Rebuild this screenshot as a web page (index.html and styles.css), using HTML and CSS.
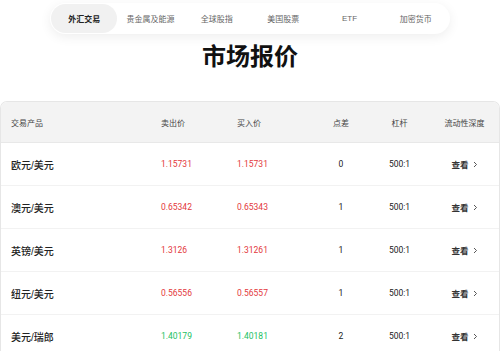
FILE: index.html
```html
<!DOCTYPE html>
<html lang="zh-CN">
<head>
  <meta charset="UTF-8">
  <meta name="viewport" content="width=device-width, initial-scale=1.0">
  <title>市场报价</title>
  <link rel="stylesheet" href="styles.css">
</head>
<body>
  <nav class="tabs">
    <button class="tab active">外汇交易</button>
    <button class="tab">贵金属及能源</button>
    <button class="tab">全球股指</button>
    <button class="tab">美国股票</button>
    <button class="tab">ETF</button>
    <button class="tab">加密货币</button>
  </nav>

  <h1 class="title">市场报价</h1>

  <div class="quotes">
    <div class="row head">
      <span class="cell">交易产品</span>
      <span class="cell">卖出价</span>
      <span class="cell">买入价</span>
      <span class="cell mid">点差</span>
      <span class="cell mid">杠杆</span>
      <span class="cell mid">流动性深度</span>
    </div>
    <div class="row">
      <span class="cell name">欧元/美元</span>
      <span class="cell num down">1.15731</span>
      <span class="cell num down">1.15731</span>
      <span class="cell num mid">0</span>
      <span class="cell num mid">500:1</span>
      <span class="cell mid"><a class="more">查看<svg width="5" height="7" viewBox="0 0 5 7"><polyline points="1,1 3.5,3.5 1,6" fill="none" stroke="#444" stroke-width="0.9"/></svg></a></span>
    </div>
    <div class="row">
      <span class="cell name">澳元/美元</span>
      <span class="cell num down">0.65342</span>
      <span class="cell num down">0.65343</span>
      <span class="cell num mid">1</span>
      <span class="cell num mid">500:1</span>
      <span class="cell mid"><a class="more">查看<svg width="5" height="7" viewBox="0 0 5 7"><polyline points="1,1 3.5,3.5 1,6" fill="none" stroke="#444" stroke-width="0.9"/></svg></a></span>
    </div>
    <div class="row">
      <span class="cell name">英镑/美元</span>
      <span class="cell num down">1.3126</span>
      <span class="cell num down">1.31261</span>
      <span class="cell num mid">1</span>
      <span class="cell num mid">500:1</span>
      <span class="cell mid"><a class="more">查看<svg width="5" height="7" viewBox="0 0 5 7"><polyline points="1,1 3.5,3.5 1,6" fill="none" stroke="#444" stroke-width="0.9"/></svg></a></span>
    </div>
    <div class="row">
      <span class="cell name">纽元/美元</span>
      <span class="cell num down">0.56556</span>
      <span class="cell num down">0.56557</span>
      <span class="cell num mid">1</span>
      <span class="cell num mid">500:1</span>
      <span class="cell mid"><a class="more">查看<svg width="5" height="7" viewBox="0 0 5 7"><polyline points="1,1 3.5,3.5 1,6" fill="none" stroke="#444" stroke-width="0.9"/></svg></a></span>
    </div>
    <div class="row">
      <span class="cell name">美元/瑞郎</span>
      <span class="cell num up">1.40179</span>
      <span class="cell num up">1.40181</span>
      <span class="cell num mid">2</span>
      <span class="cell num mid">500:1</span>
      <span class="cell mid"><a class="more">查看<svg width="5" height="7" viewBox="0 0 5 7"><polyline points="1,1 3.5,3.5 1,6" fill="none" stroke="#444" stroke-width="0.9"/></svg></a></span>
    </div>
  </div>
</body>
</html>
```

FILE: styles.css
```css
body {
  margin: 0;
  padding: 0;
  font-family: 'Liberation Sans', 'Noto Sans CJK SC', sans-serif;
  background-color: #fff;
  color: #222;
}
.tabs {
  display: flex;
  width: 400px;
  margin: 3px auto 0;
  padding: 1px;
  box-sizing: border-box;
  background: #fff;
  border-radius: 16px;
  box-shadow: 0 3px 12px rgba(0,0,0,0.07);
}
.tab {
  flex: 1;
  height: 29px;
  border: none;
  background: none;
  border-radius: 15px;
  font-family: inherit;
  font-size: 8px;
  color: #666;
  padding: 0;
}
.tab.active {
  background: #f1f1f1;
  color: #222;
  font-weight: bold;
}
.title {
  margin: 7px 0 0;
  line-height: 32px;
  font-size: 24px;
  font-weight: bold;
  text-align: center;
  color: #111;
}
.quotes {
  margin-top: 28px;
  border: 1px solid #e6e6e6;
  border-bottom: none;
  border-radius: 7px 7px 0 0;
  overflow: hidden;
}
.row {
  display: grid;
  grid-template-columns: 150px 76px 86px 56px 61px 1fr;
  align-items: center;
  box-sizing: border-box;
  height: 43px;
  border-top: 1px solid #f2f2f2;
  font-size: 8px;
  color: #1a1a1a;
}
.row.head {
  height: 41px;
  background: #f3f3f3;
  border-top: none;
  border-bottom: 1px solid #e8e8e8;
  color: #444;
}
.row.head + .row {
  border-top: none;
  height: 42px;
}
.cell {
  padding-left: 10px;
}
.cell.mid {
  padding-left: 0;
  text-align: center;
}
.num {
  font-family: Roboto, 'Liberation Sans', sans-serif;
  font-size: 8.5px;
}
.name {
  font-size: 10px;
  font-weight: 500;
  color: #222;
}
.down {
  color: #e3373c;
}
.up {
  color: #1cbf63;
}
.more {
  display: inline-flex;
  align-items: center;
  gap: 4px;
  font-size: 8.5px;
  color: #333;
  font-weight: bold;
}
```
